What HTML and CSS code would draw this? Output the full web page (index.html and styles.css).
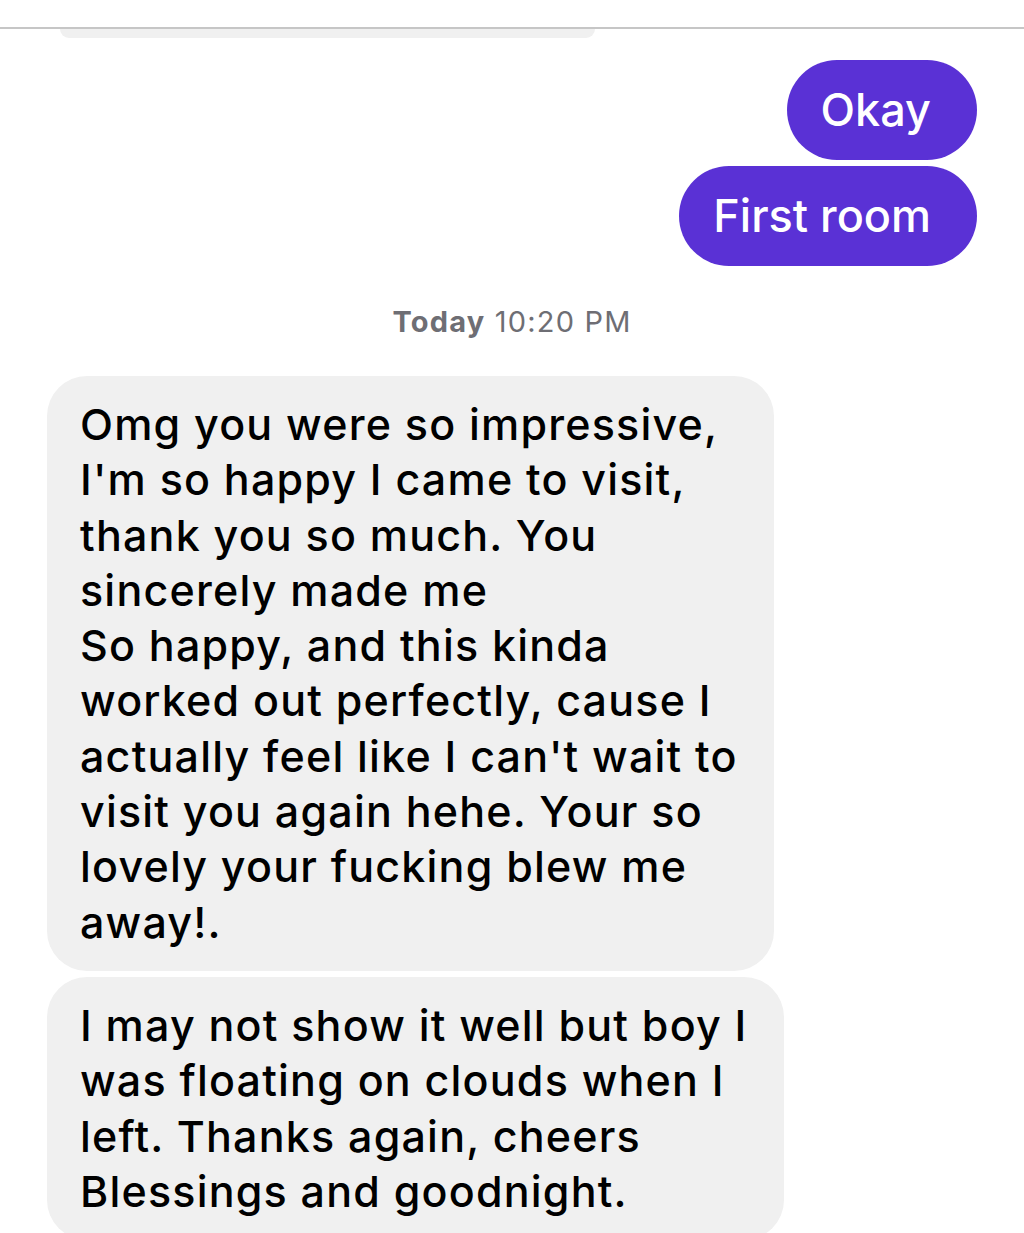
FILE: index.html
```html
<!DOCTYPE html>
<html>
<head>
  <title>Messages</title>
  <meta name="viewport" content="width=device-width, initial-scale=1">
  <link rel="stylesheet" href="styles.css">
</head>
<body>

  <div class="top-bar"></div>

  <div class="thread">
    <div class="prev-bubble"></div>

    <div class="group sent">
      <div class="bubble purple">Okay</div>
      <div class="bubble purple">First room</div>
    </div>

    <p class="timestamp"><b>Today</b> 10:20 PM</p>

    <div class="group received">
      <div class="bubble gray">Omg you were so impressive,<br>I'm so happy I came to visit,<br>thank you so much. You<br>sincerely made me<br>So happy, and this kinda<br>worked out perfectly, cause I<br>actually feel like I can't wait to<br>visit you again hehe. Your so<br>lovely your fucking blew me<br>away!.</div>
      <div class="bubble gray">I may not show it well but boy I<br>was floating on clouds when I<br>left. Thanks again, cheers<br>Blessings and goodnight.</div>
    </div>
  </div>

</body>
</html>
```

FILE: styles.css
```css
body {
  background-color: white;
  font-family: Inter, "Noto Sans", sans-serif;
  margin: 0;
  overflow: hidden;
}

.top-bar {
  height: 27px;
  border-bottom: 2px solid rgb(198, 198, 198);
}

.thread {
  padding: 0 47px;
}

.prev-bubble {
  width: 535px;
  height: 9px;
  margin-left: 13px;
  background-color: rgb(240, 240, 240);
  border-radius: 0 0 30px 30px;
}

.group {
  display: flex;
  flex-direction: column;
  gap: 6px;
}

.sent {
  align-items: flex-end;
  margin-top: 22px;
}

.received {
  align-items: flex-start;
}

.bubble {
  box-sizing: border-box;
}

.purple {
  background-color: rgb(90, 49, 213);
  color: white;
  font-size: 45px;
  font-weight: 500;
  height: 100px;
  line-height: 100px;
  padding: 0 46px 0 34px;
  border-radius: 50px;
}

.gray {
  background-color: rgb(240, 240, 240);
  color: black;
  font-size: 43px;
  font-weight: 500;
  letter-spacing: 1.2px;
  line-height: 55.3px;
  padding: 21px 36px 21px 33px;
  border-radius: 40px;
}

.timestamp {
  text-align: center;
  color: rgb(110, 110, 116);
  font-size: 29px;
  letter-spacing: 1.2px;
  margin: 39px 0 37px;
  line-height: 34px;
}

.timestamp b {
  font-weight: 700;
}
```
